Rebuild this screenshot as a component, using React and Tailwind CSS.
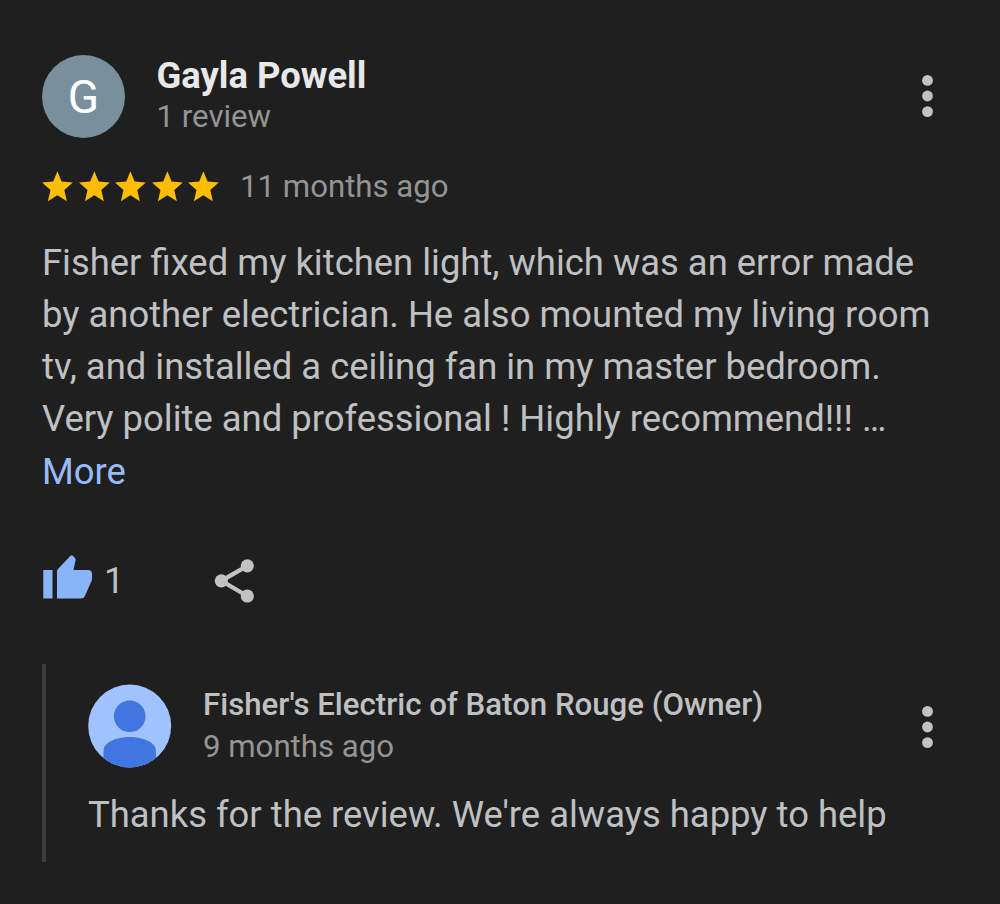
const lines = [
  'Fisher fixed my kitchen light, which was an error made',
  'by another electrician. He also mounted my living room',
  'tv, and installed a ceiling fan in my master bedroom.',
  'Very polite and professional ! Highly recommend!!! …',
];

function Star() {
  return (
    <svg width="36.6" height="31" viewBox="0 0 36.6 31" fill="#fbbc04" className="shrink-0">
      <path d="M15.4.3 19.6 10.4 30.8 11.5 22.3 19 24.9 30.2 15.4 24.3 5.9 30.2 8.5 19 0 11.5 11.2 10.4z" />
    </svg>
  );
}

function MenuButton() {
  return (
    <button type="button" aria-label="More options" className="shrink-0">
      <svg width="12" height="44" viewBox="0 0 12 44" fill="#c2c2c3">
        <circle cx="5.5" cy="6.4" r="5.4" />
        <circle cx="5.5" cy="22" r="5.4" />
        <circle cx="5.5" cy="37.6" r="5.4" />
      </svg>
    </button>
  );
}

function OwnerAvatar() {
  return (
    <svg width="84" height="84" viewBox="0 0 84 84" className="shrink-0">
      <defs>
        <clipPath id="owner">
          <circle cx="41.7" cy="42" r="41.5" />
        </clipPath>
      </defs>
      <g clipPath="url(#owner)">
        <rect width="84" height="84" fill="#a0c2fe" />
        <circle cx="41.7" cy="32.3" r="15.8" fill="#4175e0" />
        <path d="M15.5 84V67C15.5 58 29 53 41.7 53s26.2 5 26.2 14v17z" fill="#4175e0" />
      </g>
    </svg>
  );
}

export default function App() {
  return (
    <main className="h-[904px] w-[1000px] overflow-hidden bg-[#1f1f1f] pl-[42px] pr-[66px] pt-[54px] font-['Roboto',sans-serif] text-[#bfc0c2]">
      <header className="flex h-[84px] items-center">
        <div className="flex size-[83px] shrink-0 items-center justify-center rounded-full bg-[#78909c] pt-0.5 text-[46px] text-white">G</div>
        <div className="-mt-0.5 ml-[31.5px] flex-1 whitespace-nowrap">
          <h1 className="text-[36.4px] leading-[42px] font-bold text-[#e8e8e9]">Gayla Powell</h1>
          <p className="text-[31.2px] leading-[39px] text-[#949494]">1 review</p>
        </div>
        <MenuButton />
      </header>

      <div className="mt-[27px] flex h-[42px] items-center">
        <div className="flex w-[198px]">
          {[1, 2, 3, 4, 5].map(n => (
            <Star key={n} />
          ))}
        </div>
        <span className="pt-0.5 text-[31.2px] leading-[42px] text-[#949494]">11 months ago</span>
      </div>

      <div className="mt-[30px] text-[36.42px] leading-[52px] whitespace-nowrap">
        {lines.map(line => (
          <p key={line}>{line}</p>
        ))}
        <p className="pt-px text-[#98bbf6]">More</p>
      </div>

      {/* Like and share */}
      <div className="mt-[53px] flex h-[60px] items-center">
        <svg width="50" height="46" viewBox="0 0 50 46" fill="#8ab4f8" className="-mt-1.5">
          <path d="M1.3 15h9.2v28.5H1.3zM15 16.5q0-1.5 1-2.5L28.5.8q1.3-1 2.3 0l2.1 2.1q1 1 .6 2.6L31.5 15H46q4 0 4 4v4.5q0 1.2-.5 2.5l-6.6 15q-1.2 2.5-3.8 2.5H15z" />
        </svg>
        <span className="ml-3 w-[110px] text-[36px]">1</span>
        <svg width="42" height="46" viewBox="0 0 42 46" fill="#c2c2c3">
          <path d="M33.3 7.8 7.3 22.8l26 15.2" fill="none" stroke="#c2c2c3" strokeWidth="4.3" />
          <circle cx="33.3" cy="7.8" r="6.6" />
          <circle cx="7.3" cy="22.8" r="6.6" />
          <circle cx="33.3" cy="38" r="6.6" />
        </svg>
      </div>

      {/* Owner response */}
      <section className="mt-[53px] h-[198px] border-l-4 border-[#3b3d40] pl-[42px] pt-[20px]">
        <div className="flex h-[84px] items-center">
          <OwnerAvatar />
          <div className="ml-[31px] flex-1 whitespace-nowrap">
            <h2 className="text-[31.2px] leading-[42px] font-medium">Fisher's Electric of Baton Rouge (Owner)</h2>
            <p className="text-[31.2px] leading-[42px] text-[#949494]">9 months ago</p>
          </div>
          <div className="flex pt-0.5">
            <MenuButton />
          </div>
        </div>
        <p className="mt-[21px] text-[36.42px] leading-[52px] whitespace-nowrap">Thanks for the review. We're always happy to help</p>
      </section>
    </main>
  );
}
